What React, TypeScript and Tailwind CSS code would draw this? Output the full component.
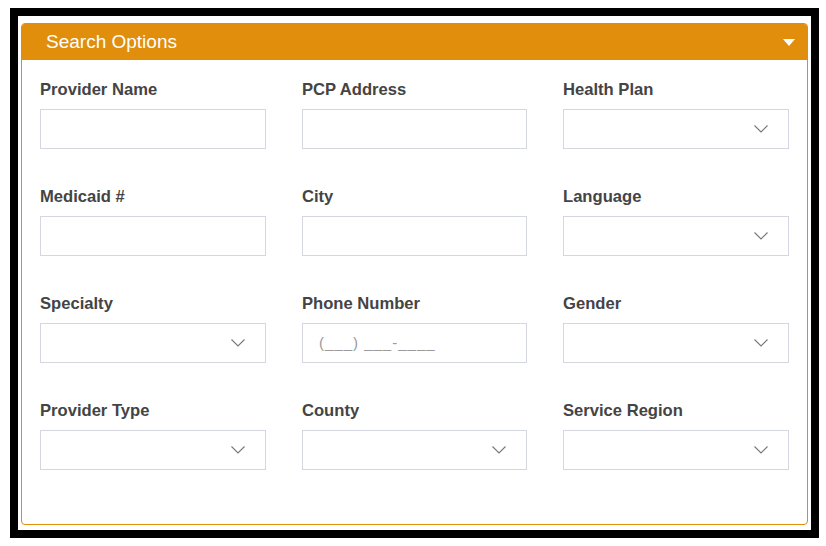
import React from "react";

type Field = { label: string; kind: "text" | "select" | "phone" };

const fields: Field[] = [
  { label: "Provider Name", kind: "text" },
  { label: "PCP Address", kind: "text" },
  { label: "Health Plan", kind: "select" },
  { label: "Medicaid #", kind: "text" },
  { label: "City", kind: "text" },
  { label: "Language", kind: "select" },
  { label: "Specialty", kind: "select" },
  { label: "Phone Number", kind: "phone" },
  { label: "Gender", kind: "select" },
  { label: "Provider Type", kind: "select" },
  { label: "County", kind: "select" },
  { label: "Service Region", kind: "select" },
];

function Chevron() {
  return (
    <svg width="14" height="8" viewBox="0 0 14 8" className="absolute right-[20px] top-[15px]">
      <path d="M0.5 0.5 L7 7 L13.5 0.5" fill="none" stroke="#777" strokeWidth="1.1" />
    </svg>
  );
}

function Control({ kind }: { kind: Field["kind"] }) {
  return (
    <div className="relative mt-[9px] h-[40px] w-full border border-[#d4d7e0] bg-white">
      {kind === "select" && <Chevron />}
      {kind === "phone" && (
        <span className="absolute left-[16px] top-[9px] text-[15px] leading-[20px] tracking-[1px] text-[#9a9a9a]">
          (___) ___-____
        </span>
      )}
    </div>
  );
}

export default function App() {
  return (
    <div className="min-h-[546px] bg-white pl-[10px] pt-[8px] font-['Liberation_Sans',Arial,sans-serif]">
      <div className="h-[530px] w-[809px] border-8 border-black bg-white pl-[3px] pt-[7px]">
        <div className="h-[502px] w-[787px] overflow-hidden rounded-[4px] border border-[#e08e0b]">
          <header className="flex h-[36px] items-center justify-between bg-[#e08e0b] pl-[24px] pr-[12px]">
            <h1 className="text-[19px] text-white">Search Options</h1>
            <svg width="12" height="7" viewBox="0 0 12 7">
              <path d="M0 0 L12 0 L6 7 Z" fill="#fff" />
            </svg>
          </header>
          <div className="grid grid-cols-[226px_225px_226px] gap-x-[36px] gap-y-[38px] pl-[18px] pt-[20px]">
            {fields.map((f) => (
              <div key={f.label}>
                <label className="block text-[16.6px] font-bold leading-[20px] text-[#444]">
                  {f.label}
                </label>
                <Control kind={f.kind} />
              </div>
            ))}
          </div>
        </div>
      </div>
    </div>
  );
}
